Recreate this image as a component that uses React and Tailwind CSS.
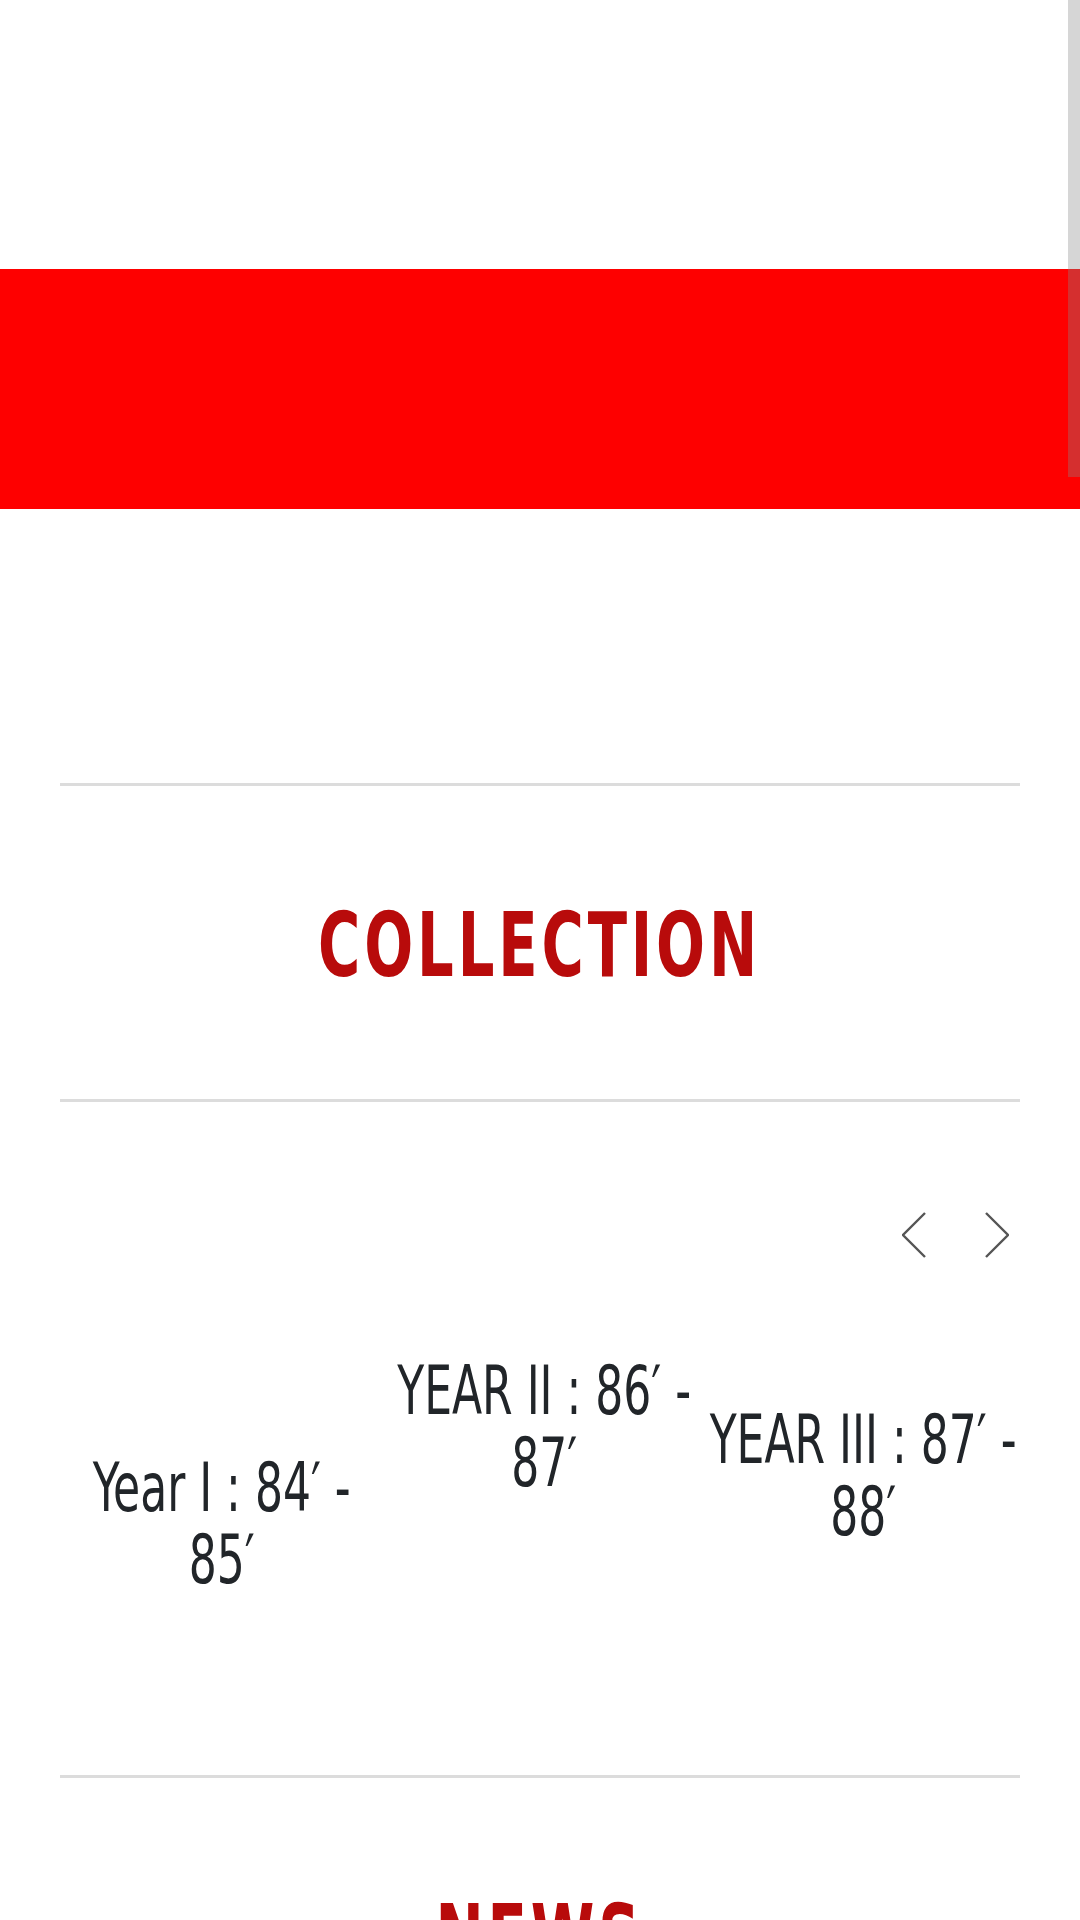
import React from "react";

const FONT = "font-['Liberation_Sans_Narrow','DejaVu_Sans_Condensed','Liberation_Sans',sans-serif]";

const YEARS = [
  { key: "y1", top: "pt-[97px]", lines: ["Year I : 84′ -", "85′"] },
  { key: "y2", top: "pt-0", lines: ["YEAR II : 86′ -", "87′"] },
  { key: "y3", top: "pt-[49px]", lines: ["YEAR III : 87′ -", "88′"] },
];

function Chevron({ dir }) {
  return (
    <svg width="24" height="46" viewBox="0 0 24 46" fill="none" aria-hidden>
      <path
        d={dir === "left" ? "M23 1 L1 23 L23 45" : "M1 1 L23 23 L1 45"}
        stroke="#555555"
        strokeWidth="2.4"
      />
    </svg>
  );
}

function SectionTitle({ children }) {
  return (
    <div className="flex justify-center border-t-[3px] border-[#dcdcdc] pt-[115px] pb-[109px]">
      <h2
        className={`${FONT} shrink-0 origin-center scale-x-[0.72] whitespace-nowrap text-[89px] font-bold leading-[89px] tracking-[0.06em] text-[#b80b0b]`}
      >
        {children}
      </h2>
    </div>
  );
}

export default function App() {
  return (
    <div className="relative h-[1920px] overflow-hidden bg-white">
      <div className="h-[269px]" />
      <div className="h-[240px] bg-[#fe0000]" />

      <main className="mx-[60px] mt-[274px]">
        <SectionTitle>COLLECTION</SectionTitle>

        <section className="border-t-[3px] border-[#dcdcdc]">
          <div className="mt-[110px] flex justify-end gap-[59px] pr-[11px]">
            <button type="button" aria-label="Previous">
              <Chevron dir="left" />
            </button>
            <button type="button" aria-label="Next">
              <Chevron dir="right" />
            </button>
          </div>

          <div className="mt-[97px] grid grid-cols-[323px_323px_314px] items-start">
            {YEARS.map((y) => (
              <div key={y.key} className={`${y.top} flex min-w-0 justify-center`}>
                <h3
                  className={`${FONT} shrink-0 origin-center scale-x-[0.73] text-center text-[67px] font-normal leading-[72px] text-[#212529]`}
                >
                  {y.lines.map((l) => (
                    <span key={l} className="block whitespace-nowrap">
                      {l}
                    </span>
                  ))}
                </h3>
              </div>
            ))}
          </div>
        </section>

        <div className="mt-[179px]">
          <SectionTitle>NEWS</SectionTitle>
        </div>
      </main>

      <div className="absolute right-0 top-0 h-[477px] w-[12px] bg-[rgba(136,136,136,0.345)]" />
    </div>
  );
}
